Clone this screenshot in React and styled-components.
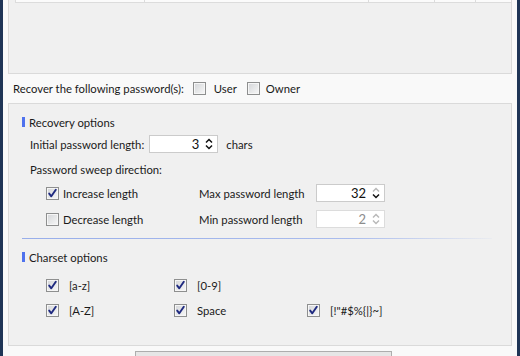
import styled, { createGlobalStyle } from "styled-components"

const Global = createGlobalStyle`
  html, body { margin: 0; padding: 0; }
  body {
    width: 520px;
    height: 356px;
    overflow: hidden;
    background: #f9f9f9;
    font-family: Lato, "Noto Sans", "Liberation Sans", sans-serif;
    font-size: 11.3px;
    color: #1a1a1a;
  }
`

const Frame = styled.div`
  width: 520px;
  height: 356px;
  box-sizing: border-box;
  border-left: 3px solid #1f3556;
  border-right: 3px solid #1f3556;
  padding: 0 5px;
  display: flex;
  flex-direction: column;
  overflow: hidden;
  background: #f9f9f9;
`

const TopPanel = styled.div`
  height: 74px;
  flex: none;
  box-sizing: border-box;
  border: 1px solid #dadada;
  border-top: none;
  background: #f0f0f0;
  padding-left: 6px;
`

const ListHeader = styled.div`
  display: flex;
  height: 2px;
  border-bottom: 1px solid #dcdcdc;
  background: #fbfbfb;
`

const HeaderCell = styled.div`
  width: ${p => p.$w}px;
  flex: ${p => (p.$grow ? 1 : "none")};
  border-left: 1px solid #dcdcdc;
`

const RecoverRow = styled.div`
  height: 29px;
  flex: none;
  display: flex;
  align-items: center;
  padding-left: 5px;
`

const OptionsPanel = styled.div`
  height: 243px;
  flex: none;
  box-sizing: border-box;
  border: 1px solid #dadada;
  background: #f0f0f0;
  padding: 10px 0 0 13px;
  display: flex;
  flex-direction: column;
`

const SectionTitle = styled.div`
  display: flex;
  align-items: center;
  height: 16px;
  margin-top: ${p => p.$mt || 0}px;
  &::before {
    content: "";
    width: 3px;
    height: 10px;
    background: #4f72ee;
    margin-right: 4px;
  }
`

const Row = styled.div`
  display: flex;
  align-items: center;
  height: ${p => p.$h || 20}px;
  margin-top: ${p => p.$mt || 0}px;
  margin-left: ${p => p.$ml || 0}px;
`

const SweepGrid = styled.div`
  display: grid;
  grid-template-columns: 153px 117px 70px;
  grid-auto-rows: 20px;
  row-gap: 6px;
  align-items: center;
  margin: 6px 0 0 24px;
`

const CharsetGrid = styled.div`
  display: grid;
  grid-template-columns: 128px 133px 160px;
  grid-auto-rows: 16px;
  row-gap: 9px;
  align-items: center;
  margin: 12px 0 0 24px;
`

const Separator = styled.div`
  height: 1px;
  width: 470px;
  margin-top: 9px;
  background: linear-gradient(to right, #98aeea, #aabced 70%, rgba(220, 226, 240, 0.3));
`

const Check = styled.label`
  display: flex;
  align-items: center;
  gap: ${p => p.$gap || 4}px;
  margin-left: ${p => p.$ml || 0}px;
`

const Box = styled.span`
  width: 13px;
  height: 13px;
  box-sizing: border-box;
  border: 1px solid #8e8f8f;
  box-shadow: inset 0 0 0 1px #f6f6f6;
  background: linear-gradient(135deg, #d3d5d8, #f8f8f8);
  display: inline-flex;
  align-items: center;
  justify-content: center;
  flex: none;
`

const Spin = styled.div`
  width: 69px;
  height: 18px;
  box-sizing: border-box;
  border: 1px solid ${p => (p.$disabled ? "#dcdcdc" : "#cbcbcb")};
  background: #fff;
  display: flex;
  align-items: center;
  justify-content: flex-end;
  gap: 6px;
  padding-right: 4px;
  color: ${p => (p.$disabled ? "#8d8d8d" : "#111")};
  font-size: 13px;
`

const Label = styled.span`
  margin-left: ${p => p.$ml || 0}px;
  white-space: nowrap;
`

const Footer = styled.div`
  flex: 1;
  padding: 5px 0 0 127px;
`

const Button = styled.div`
  width: 257px;
  height: 20px;
  box-sizing: border-box;
  border: 1px solid #adadad;
  background: #e6e6e6;
`

const Checkbox = ({ checked, label, gap, ml }) => (
  <Check $gap={gap} $ml={ml}>
    <Box>
      {checked && (
        <svg width="11" height="11" viewBox="0 0 11 11">
          <path d="M2.2 5.6 L4.3 8.3 L8.8 1.8" fill="none" stroke="#1f2a80" strokeWidth="1.9" strokeLinecap="round" strokeLinejoin="round" />
        </svg>
      )}
    </Box>
    <span>{label}</span>
  </Check>
)

const Arrows = ({ up = "#111", down = "#111" }) => (
  <svg width="8" height="12" viewBox="0 0 8 12">
    <path d="M1 4.5 L4 1.5 L7 4.5" fill="none" stroke={up} strokeWidth="1.5" />
    <path d="M1 7.5 L4 10.5 L7 7.5" fill="none" stroke={down} strokeWidth="1.5" />
  </svg>
)

const Spinner = ({ value, disabled, upOff }) => (
  <Spin $disabled={disabled}>
    <span>{value}</span>
    <Arrows
      up={disabled || upOff ? "#b9b9b9" : "#111"}
      down={disabled ? "#b9b9b9" : "#111"}
    />
  </Spin>
)

const App = () => {
  return (
    <Frame>
      <Global />
      <TopPanel>
        <ListHeader>
          <HeaderCell $w={128} />
          <HeaderCell $w={223} />
          <HeaderCell $w={65} />
          <HeaderCell $w={40} />
          <HeaderCell $grow />
        </ListHeader>
      </TopPanel>
      <RecoverRow>
        <span>Recover the following password(s):</span>
        <Checkbox label="User" gap={8} ml={9} />
        <Checkbox label="Owner" gap={6} ml={10} />
      </RecoverRow>
      <OptionsPanel>
        <SectionTitle>Recovery options</SectionTitle>
        <Row $mt={4} $ml={8}>
          <Label>Initial password length:</Label>
          <Label $ml={5}><Spinner value="3" /></Label>
          <Label $ml={8}>chars</Label>
        </Row>
        <Row $h={16} $mt={7} $ml={8}>
          <Label>Password sweep direction:</Label>
        </Row>
        <SweepGrid>
          <Checkbox checked label="Increase length" />
          <Label>Max password length</Label>
          <Spinner value="32" upOff />
          <Checkbox label="Decrease length" />
          <Label>Min password length</Label>
          <Spinner value="2" disabled />
        </SweepGrid>
        <Separator />
        <SectionTitle $mt={10}>Charset options</SectionTitle>
        <CharsetGrid>
          <Checkbox checked label="[a-z]" gap={10} />
          <Checkbox checked label="[0-9]" gap={10} />
          <span />
          <Checkbox checked label="[A-Z]" gap={10} />
          <Checkbox checked label="Space" gap={10} />
          <Checkbox checked label={'[!"#$%{|}~]'} gap={10} />
        </CharsetGrid>
      </OptionsPanel>
      <Footer>
        <Button />
      </Footer>
    </Frame>
  )
}

export default App
